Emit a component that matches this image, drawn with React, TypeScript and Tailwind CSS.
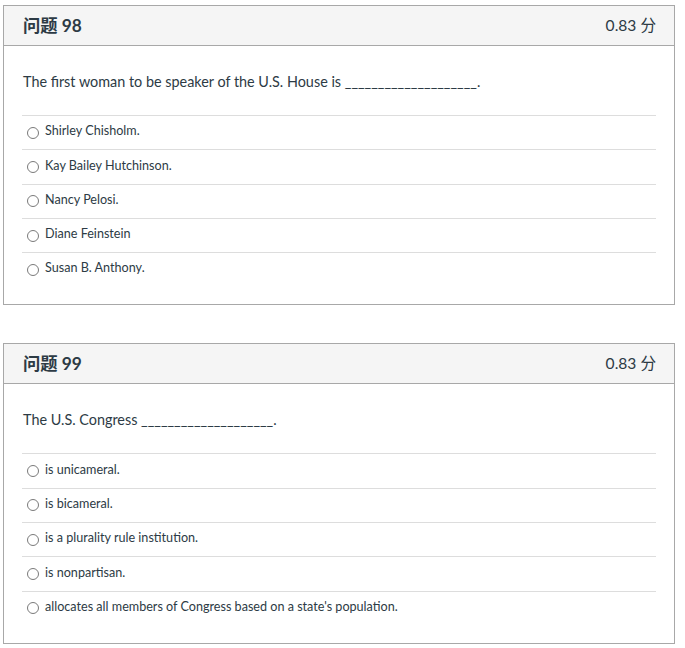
import React from "react";

type Q = { num: number; text: string; options: string[] };

const questions: Q[] = [
  {
    num: 98,
    text: "The first woman to be speaker of the U.S. House is ____________________.",
    options: [
      "Shirley Chisholm.",
      "Kay Bailey Hutchinson.",
      "Nancy Pelosi.",
      "Diane Feinstein",
      "Susan B. Anthony.",
    ],
  },
  {
    num: 99,
    text: "The U.S. Congress ____________________.",
    options: [
      "is unicameral.",
      "is bicameral.",
      "is a plurality rule institution.",
      "is nonpartisan.",
      "allocates all members of Congress based on a state's population.",
    ],
  },
];

function Card({ q }: { q: Q }) {
  return (
    <div className="ml-[3px] w-[672px] border border-[#a8a8a8] bg-white">
      <div className="flex h-[40px] items-center justify-between border-b border-[#a8a8a8] bg-[#f5f5f5] pl-[19px] pr-[18px]">
        <span className="text-[17.3px] font-bold text-[#2d3b45]">问题 {q.num}</span>
        <span className="text-[15.6px] text-[#2d3b45]">0.83 分</span>
      </div>
      <div className="px-[18px] pb-[18px] pt-[25px]">
        <div className="mb-[23px] pl-[1px] text-[14.4px] leading-[21px] text-[#2d3b45]">{q.text}</div>
        <div>
          {q.options.map((o) => (
            <div key={o} className="flex h-[34.3px] items-center border-t border-[#dddddd] pl-[5px]">
              <span className="mr-[6px] box-border h-[12px] w-[12px] shrink-0 rounded-full border border-[#7a7a7a] bg-white" />
              <span className="relative top-[-1px] text-[12.6px] text-[#2d3b45]">{o}</span>
            </div>
          ))}
        </div>
      </div>
    </div>
  );
}

export default function App() {
  return (
    <div
      className="min-h-[648px] w-[685px] bg-white pt-[5px]"
      style={{ fontFamily: "Lato, 'Noto Sans CJK SC', sans-serif" }}
    >
      <div className="flex flex-col gap-[38px]">
        {questions.map((q) => (
          <Card key={q.num} q={q} />
        ))}
      </div>
    </div>
  );
}
